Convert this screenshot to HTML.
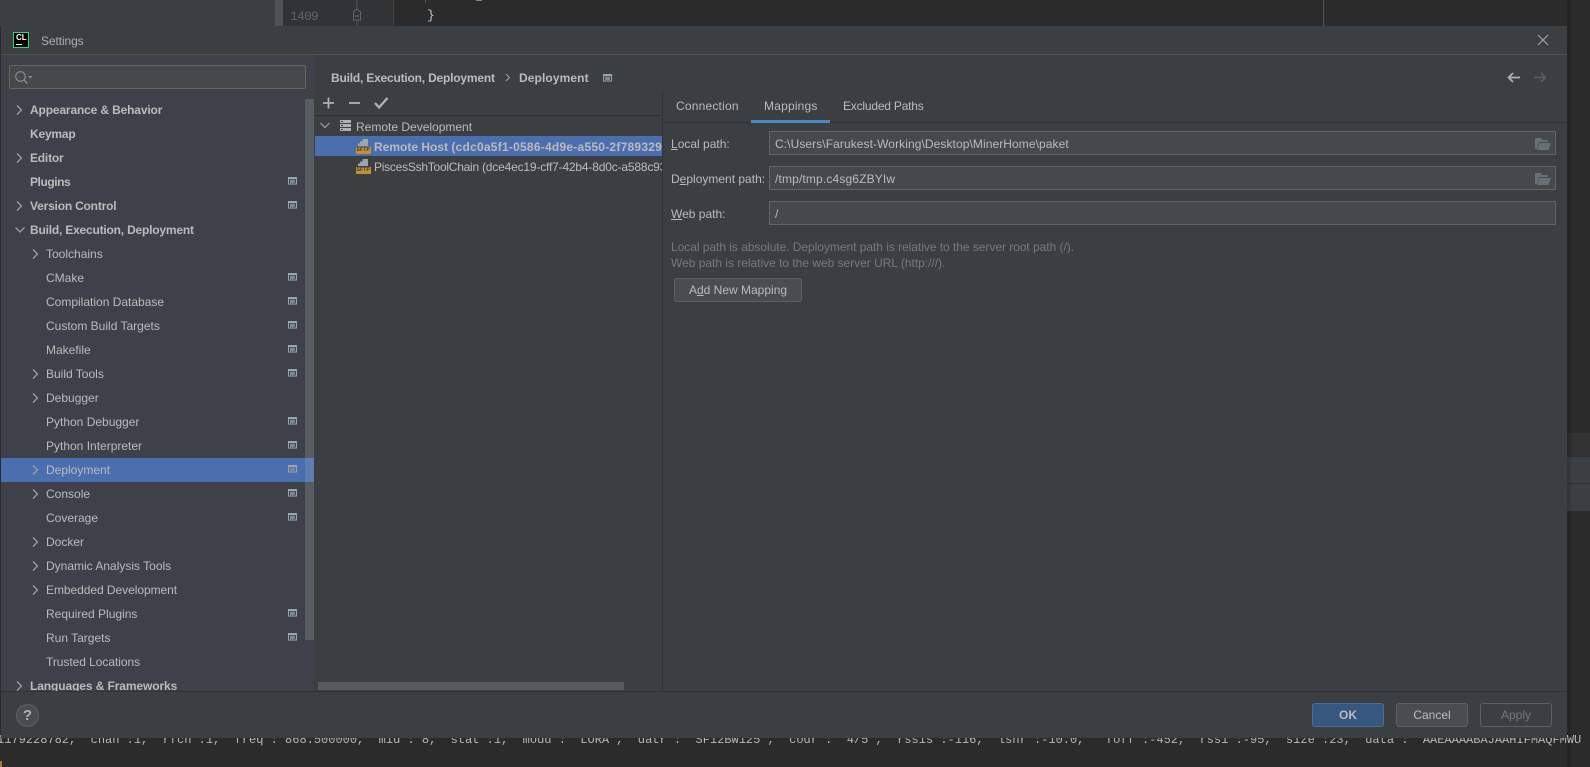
<!DOCTYPE html>
<html><head><meta charset="utf-8"><style>
html,body{margin:0;padding:0;width:1590px;height:767px;overflow:hidden;background:#2b2b2b}
*{box-sizing:border-box}
body{font:12px/16px "Liberation Sans",sans-serif;color:#bbb;position:relative}
.a,.t,.b,.row,.f,.btn{position:absolute}
.t{white-space:nowrap;height:16px}
.b{font-weight:bold;letter-spacing:-.2px}
.row{left:0;width:304px;height:24px}
.row .t{top:4px}
.top .t{left:30px;font-weight:bold;letter-spacing:-.2px}
.sub .t{left:46px}
.row svg{position:absolute;top:0;left:0}
.f{left:769px;width:787px;height:24px;background:#45494a;border:1px solid #646464;padding:4px 5px 0;line-height:16px}
.btn{height:24px;width:72px;border:1px solid #5e6060;border-radius:3px;background:#4a4d4f;text-align:center;line-height:23px}
u{text-underline-offset:1px}
</style></head><body>
<svg width="0" height="0" style="position:absolute"><defs>
<g id="ch"><path d="M0 0L4.5 4.5L0 9" fill="none" stroke="#9da0a2" stroke-width="1.3"/></g>
<g id="cfg"><rect x=".5" y=".5" width="8" height="6.500" fill="none" stroke="#9aa7b0"/><rect x="1" y="1" width="7" height="1.200" fill="#9aa7b0"/><rect x="2" y="3" width="5" height="3" fill="#7d8a93"/></g>
<g id="folder"><path d="M0 1h6l1 2h6v2H4L2 12H0z" fill="#667075"/><path d="M4.5 6H16l-2.5 7H2z" fill="#667075"/></g>
<g id="sftp"><path d="M2 7V4.500H4V2.500H6.500V0H12V7z" fill="#9aa7b0"/><rect x="0" y="8" width="15" height="7" fill="#c0913a"/></g>
</defs></svg>

<!-- editor background -->
<div class="a" style="left:0;top:0;width:275px;height:26px;background:#3c3f41"></div>
<div class="a" style="left:275px;top:0;width:8px;height:26px;background:#505252"></div>
<div class="a" style="left:283px;top:0;width:110px;height:26px;background:#313335"></div>
<div class="a" style="left:393px;top:0;width:1px;height:26px;background:#414141"></div>
<div class="a" style="left:1323px;top:0;width:1px;height:26px;background:#555"></div>
<div class="a" style="left:290px;top:9px;font:13px/15px 'Liberation Mono',monospace;color:#606366;letter-spacing:-.8px">1409</div>
<svg class="a" style="left:350px;top:0" width="14" height="26"><path d="M7 0V9M7 21V26" stroke="#555" fill="none"/><path d="M3.500 12L7 9L10.500 12V20H3.500z" fill="none" stroke="#666"/><path d="M5 16H9" stroke="#777"/></svg>
<div class="a" style="left:427px;top:8px;font:13px/16px 'Liberation Mono',monospace;color:#a9c9d6">}</div>
<div class="a" style="left:425px;top:0;width:1px;height:3px;background:#555"></div>
<div class="a" style="left:476px;top:0;width:6px;height:1px;background:#888"></div>
<div class="a" style="left:1567px;top:433px;width:23px;height:24px;background:#323232"></div>
<div class="a" style="left:1567px;top:457px;width:23px;height:26px;background:#3c3f41"></div>
<div class="a" style="left:1567px;top:483px;width:23px;height:1px;background:#2f2f2f"></div>
<div class="a" style="left:1567px;top:484px;width:23px;height:27px;background:#3c3f41"></div>
<div class="a" style="left:1567px;top:0;width:4px;height:767px;background:rgba(0,0,0,.12)"></div>
<div class="a" style="left:-3px;top:732px;white-space:pre;font:12px/16px 'Liberation Mono',monospace;color:#b4b9bd">1179228782, "chan":1, "rfch":1, "freq": 868.500000, "mid": 8, "stat":1, "modu": "LORA", "datr": "SF12BW125", "codr": "4/5", "rssis":-116, "lsnr":-10.0,  "foff":-452, "rssi":-95, "size":23, "data": "AAEAAAABAJAAHIFMAQFMWU</div>
<div class="a" style="left:0;top:761px;width:2px;height:6px;background:#a9762f"></div>

<!-- dialog -->
<div class="a" id="dlg" style="left:1px;top:26px;width:1566px;height:712px;background:#3c3f41;overflow:hidden">
<div style="position:absolute;left:-1px;top:-26px;width:1590px;height:767px">

<!-- title -->
<div class="a" style="left:1px;top:54px;width:1566px;height:1px;background:#515151"></div>
<div class="a" style="left:13px;top:32px;width:16px;height:16px;background:#000;border:1px solid #21d789"></div>
<div class="a" style="left:16px;top:33px;font:bold 8px/10px 'Liberation Sans',sans-serif;color:#fff">CL</div>
<div class="a" style="left:16px;top:44px;width:6px;height:1px;background:#fff"></div>
<div class="t" style="left:41px;top:33px;color:#a9adaf;letter-spacing:-.1px">Settings</div>
<svg class="a" style="left:1537px;top:34px" width="12" height="12"><path d="M1 1L11 11M11 1L1 11" stroke="#a4a6a8" stroke-width="1.100" fill="none"/></svg>

<!-- sidebar -->
<div class="a" style="left:1px;top:55px;width:313px;height:636px;background:#3e4149;overflow:hidden">
 <div style="position:absolute;left:-1px;top:-55px;width:320px;height:760px">
  <div class="a" style="left:9px;top:65px;width:297px;height:24px;background:#45494a;border:1px solid #646464;border-radius:2px"></div>
  <svg class="a" style="left:14px;top:70px" width="20" height="16"><circle cx="6.500" cy="6.500" r="4.800" fill="none" stroke="#8a8d8f" stroke-width="1.100"/><path d="M10 10L13.500 13.500" stroke="#8a8d8f" stroke-width="1.300"/><path d="M14 6H18.500L16.200 8.500z" fill="#8a8d8f"/></svg>
  <div class="a" style="left:305px;top:99px;width:9px;height:541px;background:#585c63"></div>
  <div class="a" style="left:1px;top:458px;width:304px;height:24px;background:#4b6eaf"></div>
  <div class="a" style="left:305px;top:458px;width:9px;height:24px;background:#5f7db3"></div>

  <div class="row top" style="top:98px"><svg width="30" height="24"><use href="#ch" x="17" y="7.500"/></svg><span class="t" style="letter-spacing:-.15px">Appearance &amp; Behavior</span></div>
  <div class="row top" style="top:122px"><span class="t">Keymap</span></div>
  <div class="row top" style="top:146px"><svg width="30" height="24"><use href="#ch" x="17" y="7.500"/></svg><span class="t">Editor</span></div>
  <div class="row top" style="top:170px"><span class="t" style="letter-spacing:-.45px">Plugins</span><svg width="304" height="24"><use href="#cfg" x="288" y="7"/></svg></div>
  <div class="row top" style="top:194px"><svg width="304" height="24"><use href="#ch" x="17" y="7.500"/><use href="#cfg" x="288" y="7"/></svg><span class="t">Version Control</span></div>
  <div class="row top" style="top:218px"><svg width="30" height="24"><path d="M15.500 9.500L20 14L24.500 9.500" fill="none" stroke="#9da0a2" stroke-width="1.300"/></svg><span class="t">Build, Execution, Deployment</span></div>
  <div class="row sub" style="top:242px"><svg width="50" height="24"><use href="#ch" x="33" y="7.500"/></svg><span class="t">Toolchains</span></div>
  <div class="row sub" style="top:266px"><svg width="304" height="24"><use href="#cfg" x="288" y="7"/></svg><span class="t">CMake</span></div>
  <div class="row sub" style="top:290px"><svg width="304" height="24"><use href="#cfg" x="288" y="7"/></svg><span class="t">Compilation Database</span></div>
  <div class="row sub" style="top:314px"><svg width="304" height="24"><use href="#cfg" x="288" y="7"/></svg><span class="t">Custom Build Targets</span></div>
  <div class="row sub" style="top:338px"><svg width="304" height="24"><use href="#cfg" x="288" y="7"/></svg><span class="t">Makefile</span></div>
  <div class="row sub" style="top:362px"><svg width="304" height="24"><use href="#ch" x="33" y="7.500"/><use href="#cfg" x="288" y="7"/></svg><span class="t">Build Tools</span></div>
  <div class="row sub" style="top:386px"><svg width="50" height="24"><use href="#ch" x="33" y="7.500"/></svg><span class="t">Debugger</span></div>
  <div class="row sub" style="top:410px"><svg width="304" height="24"><use href="#cfg" x="288" y="7"/></svg><span class="t">Python Debugger</span></div>
  <div class="row sub" style="top:434px"><svg width="304" height="24"><use href="#cfg" x="288" y="7"/></svg><span class="t">Python Interpreter</span></div>
  <div class="row sub" style="top:458px"><svg width="304" height="24"><use href="#ch" x="33" y="7.500"/><use href="#cfg" x="288" y="7"/></svg><span class="t">Deployment</span></div>
  <div class="row sub" style="top:482px"><svg width="304" height="24"><use href="#ch" x="33" y="7.500"/><use href="#cfg" x="288" y="7"/></svg><span class="t">Console</span></div>
  <div class="row sub" style="top:506px"><svg width="304" height="24"><use href="#cfg" x="288" y="7"/></svg><span class="t">Coverage</span></div>
  <div class="row sub" style="top:530px"><svg width="50" height="24"><use href="#ch" x="33" y="7.500"/></svg><span class="t">Docker</span></div>
  <div class="row sub" style="top:554px"><svg width="50" height="24"><use href="#ch" x="33" y="7.500"/></svg><span class="t">Dynamic Analysis Tools</span></div>
  <div class="row sub" style="top:578px"><svg width="50" height="24"><use href="#ch" x="33" y="7.500"/></svg><span class="t" style="letter-spacing:-.05px">Embedded Development</span></div>
  <div class="row sub" style="top:602px"><svg width="304" height="24"><use href="#cfg" x="288" y="7"/></svg><span class="t">Required Plugins</span></div>
  <div class="row sub" style="top:626px"><svg width="304" height="24"><use href="#cfg" x="288" y="7"/></svg><span class="t">Run Targets</span></div>
  <div class="row sub" style="top:650px"><span class="t" style="letter-spacing:-.05px">Trusted Locations</span></div>
  <div class="row top" style="top:674px"><svg width="30" height="24"><use href="#ch" x="17" y="7.500"/></svg><span class="t" style="letter-spacing:-.1px">Languages &amp; Frameworks</span></div>
 </div>
</div>

<!-- breadcrumb -->
<div class="t b" style="left:331px;top:70px">Build, Execution, Deployment</div>
<svg class="a" style="left:505px;top:73px" width="6" height="9"><path d="M1 1L4.500 4.500L1 8" fill="none" stroke="#9da0a2"/></svg>
<div class="t b" style="left:519px;top:70px;letter-spacing:.1px">Deployment</div>
<svg class="a" style="left:603px;top:74px" width="10" height="9"><use href="#cfg"/></svg>
<svg class="a" style="left:1506px;top:71px" width="16" height="13"><path d="M14 6.500H3M7 2L2.500 6.500L7 11" fill="none" stroke="#afb1b3" stroke-width="1.700"/></svg>
<svg class="a" style="left:1533px;top:71px" width="16" height="13"><path d="M1 6.500H12M8 2L12.500 6.500L8 11" fill="none" stroke="#5a5d5f" stroke-width="1.700"/></svg>

<!-- toolbar -->
<svg class="a" style="left:320px;top:95px" width="72" height="16"><path d="M3 8H14M8.500 2.500V13.500" stroke="#afb1b3" stroke-width="1.800" fill="none"/><path d="M29 8H40" stroke="#afb1b3" stroke-width="1.800" fill="none"/><path d="M55 8L59 12.500L67.500 3" stroke="#afb1b3" stroke-width="2.300" fill="none"/></svg>
<div class="a" style="left:315px;top:115px;width:347px;height:1px;background:#323232"></div>
<div class="a" style="left:662px;top:91px;width:1px;height:600px;background:#323232"></div>

<!-- tree -->
<svg class="a" style="left:320px;top:122px" width="10" height="7"><path d="M.5 1L5 5.500L9.500 1" fill="none" stroke="#9da0a2" stroke-width="1.200"/></svg>
<svg class="a" style="left:340px;top:120px" width="11" height="12"><rect width="11" height="3" y="0" fill="#afb1b3"/><rect width="11" height="3" y="4" fill="#afb1b3"/><rect width="11" height="3" y="8" fill="#afb1b3"/><rect x="1" y="1" width="2" height="1" fill="#3c3f41"/><rect x="1" y="5" width="2" height="1" fill="#3c3f41"/><rect x="1" y="9" width="2" height="1" fill="#3c3f41"/></svg>
<div class="t" style="left:356px;top:119px">Remote Development</div>
<div class="a" style="left:315px;top:136px;width:347px;height:20px;background:#4b6eaf"></div>
<svg class="a" style="left:356px;top:139px" width="16" height="16"><use href="#sftp"/></svg>
<div class="a" style="left:356.500px;top:147px;font:bold 5px/7px 'Liberation Sans',sans-serif;color:#4a3c1a;letter-spacing:.2px">SFTP</div>
<div class="a" style="left:374px;top:139px;width:288px;overflow:hidden;white-space:nowrap;font-weight:bold">Remote Host <span style="letter-spacing:.24px">(cdc0a5f1-0586-4d9e-a550-2f789329a1c4)</span></div>
<svg class="a" style="left:356px;top:159px" width="16" height="16"><use href="#sftp"/></svg>
<div class="a" style="left:356.500px;top:167px;font:bold 5px/7px 'Liberation Sans',sans-serif;color:#4a3c1a;letter-spacing:.2px">SFTP</div>
<div class="a" style="left:374px;top:159px;width:288px;overflow:hidden;white-space:nowrap"><span style="letter-spacing:-.25px">PiscesSshToolChain </span><span style="letter-spacing:-.18px">(dce4ec19-cff7-42b4-8d0c-a588c93e7d10)</span></div>
<div class="a" style="left:318px;top:682px;width:306px;height:8px;background:#585a5c"></div>

<!-- tabs -->
<div class="t" style="left:676px;top:98px;letter-spacing:.2px">Connection</div>
<div class="t" style="left:764px;top:98px;letter-spacing:.2px">Mappings</div>
<div class="t" style="left:843px;top:98px;letter-spacing:-.2px">Excluded Paths</div>
<div class="a" style="left:663px;top:122px;width:904px;height:1px;background:#323232"></div>
<div class="a" style="left:751px;top:120px;width:79px;height:3px;background:#4a88c7"></div>

<!-- form -->
<div class="t" style="left:671px;top:136px"><u>L</u>ocal path:</div>
<div class="f" style="top:131px;letter-spacing:.08px">C:\Users\Farukest-Working\Desktop\MinerHome\paket</div>
<svg class="a" style="left:1535px;top:137px" width="16" height="14"><use href="#folder"/></svg>
<div class="t" style="left:671px;top:171px">D<u>e</u>ployment path:</div>
<div class="f" style="top:166px;letter-spacing:.15px">/tmp/tmp.c4sg6ZBYIw</div>
<svg class="a" style="left:1535px;top:172px" width="16" height="14"><use href="#folder"/></svg>
<div class="t" style="left:671px;top:206px"><u>W</u>eb path:</div>
<div class="f" style="top:201px">/</div>
<div class="t" style="left:671px;top:239px;color:#787878;letter-spacing:-.04px">Local path is absolute. Deployment path is relative to the server root path (/).</div>
<div class="t" style="left:671px;top:255px;color:#787878;letter-spacing:-.02px">Web path is relative to the web server URL (http:///).</div>
<div class="btn" style="left:674px;top:278px;width:128px">A<u>d</u>d New Mapping</div>

<!-- bottom -->
<div class="a" style="left:1px;top:691px;width:1566px;height:1px;background:#323232"></div>
<div class="a" style="left:1px;top:692px;width:1566px;height:46px;background:#3c3f41"></div>
<div class="a" style="left:16px;top:704px;width:23px;height:23px;border-radius:50%;background:#4a4d4f;border:1px solid #5e6060;text-align:center;font:bold 15px/21px 'Liberation Sans',sans-serif;color:#afb1b3">?</div>
<div class="btn b" style="left:1312px;top:703px;background:#365880;border-color:#4c708c;color:#bbb;letter-spacing:0">OK</div>
<div class="btn" style="left:1396px;top:703px">Cancel</div>
<div class="btn" style="left:1480px;top:703px;background:#3c3f41;border-color:#5e6060;color:#777">Apply</div>

</div></div>
</body></html>
